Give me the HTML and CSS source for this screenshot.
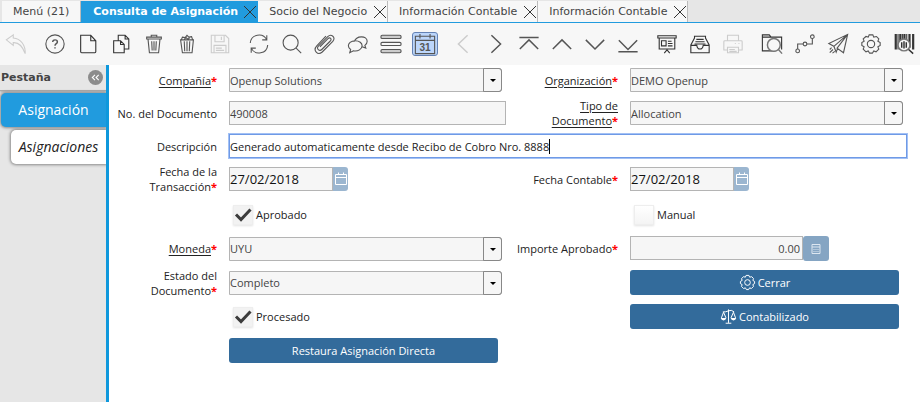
FILE: index.html
```html
<!DOCTYPE html>
<html lang="es">
<head>
<meta charset="utf-8">
<title>Consulta de Asignación</title>
<meta name="viewport" content="width=device-width, initial-scale=1">
<link rel="stylesheet" href="styles.css">
</head>
<body>
<nav class="tabs">
  <div class="tab tab-home"><a href="#menu">Menú (21)</a></div>
  <div class="tab tab-active"><a href="#consulta">Consulta de Asignación</a><button class="close"><svg viewBox="0 0 14 14"><path d="M1 1l12 12M13 1L1 13"/></svg></button></div>
  <div class="tab"><a href="#socio">Socio del Negocio</a><button class="close"><svg viewBox="0 0 14 14"><path d="M1 1l12 12M13 1L1 13"/></svg></button></div>
  <div class="tab"><a href="#info1">Información Contable</a><button class="close"><svg viewBox="0 0 14 14"><path d="M1 1l12 12M13 1L1 13"/></svg></button></div>
  <div class="tab"><a href="#info2">Información Contable</a><button class="close"><svg viewBox="0 0 14 14"><path d="M1 1l12 12M13 1L1 13"/></svg></button></div>
</nav>

<div class="toolbar">
  <div class="group">
    <button class="tool" disabled><svg viewBox="0 0 24 24"><path d="M9 2L1.500 7.500 9 13.500V10.500C15 10 19 14 22 22.500C22.500 13 17 6 9 5.500Z"/></svg></button>
  </div>
  <div class="group">
    <button class="tool"><svg viewBox="0 0 24 24"><circle cx="12" cy="12" r="10"/><path class="bold" d="M9.500 9.700C9.500 6.700 14.600 6.800 14.600 9.700C14.600 11.700 12 11.500 12 13.800M12 15.500V17"/></svg></button>
    <button class="tool dark"><svg viewBox="0 0 24 24"><path d="M4 2.500H15L20.500 8.500V20.500Q20.500 21.500 19.500 21.500H5Q4 21.500 4 20.500ZM15 2.500V8.500H20.500"/></svg></button>
    <button class="tool dark"><svg viewBox="0 0 24 24"><path d="M4 8.500H11.500L15.500 12.500V21.500H4ZM11.500 8.500V12.500H15.500M9 8.500V2.500H16.500L20.500 6.500V17.500H15.500M16.500 2.500V6.500H20.500"/></svg></button>
    <button class="tool"><svg viewBox="0 0 24 24"><path d="M4 4.500H20V6.500H4ZM9 4V2.500H15V4M5.500 7L7 21.500H17L18.500 7M9.500 9L10 19M12 9V19M14.500 9L14 19"/></svg></button>
    <button class="tool"><svg viewBox="0 0 24 24"><path d="M5 7.500H19L17.500 21.500H7ZM6 7L7 4.500 10 5 12 2.500 14 4.500 17 4 18 7M9 7L11 5 13 7 15 5M9 9L9.500 20M12 9V20M15 9L14.500 20"/></svg></button>
    <button class="tool" disabled><svg viewBox="0 0 24 24"><path d="M2.500 2.500H18L21.500 6V21.500H2.500ZM6.500 2.500V9.500H16.500V2.500M13.500 4V7.500M5.500 21.500V13.500H18.500V21.500M7.500 16.500H14M7.500 19H16.500"/></svg></button>
  </div>
  <div class="group">
    <button class="tool"><svg viewBox="0 0 24 24"><path d="M2.500 11A9.500 9.500 0 0 1 20.500 7.500M20.500 2.500V7.500H15.500M21.500 13A9.500 9.500 0 0 1 3.500 16.500M3.500 21.500V16.500H8.500"/></svg></button>
    <button class="tool"><svg viewBox="0 0 24 24"><circle cx="10.500" cy="10.500" r="8.200"/><path d="M16.500 16.500L22 22"/></svg></button>
    <button class="tool"><svg viewBox="0 0 24 24"><path d="M6.500 15L15 6.500C17.500 4 20 6.500 17.500 9L8.500 18C6 20.500 2 17 4.800 14.200L15 4C18.500 .5 24.500 4.500 20.500 9.200L9 20.700C4 25-1.500 19 3 14L13 3.500"/></svg></button>
    <button class="tool"><svg viewBox="0 0 24 24"><path d="M8 9.500C10 2.500 22 2.500 22 9C22 11 21 12.500 19.500 13.500L20.500 16.500 16.500 15M9 8.500C4 8.500 1.500 11.500 1.500 14C1.500 15.500 2.500 17 4 18L3 21.500 7 19.500C12 20.500 16.500 17.500 16.500 14C16.500 11 13.500 8.500 9 8.500Z"/></svg></button>
    <button class="tool"><svg viewBox="0 0 24 24"><rect class="gray" x="1" y="2.500" width="22" height="3.500" rx="1.500"/><rect x="1" y="10.200" width="22" height="3.500" rx="1.500"/><rect class="gray" x="1" y="18" width="22" height="3.500" rx="1.500"/></svg></button>
    <button class="tool pressed"><svg viewBox="0 0 24 24"><path d="M1.500 3.500H22.500V22.500H1.500ZM1.500 8H22.500M6.500 1V6M17.500 1V6"/><text x="12" y="19.500" text-anchor="middle">31</text></svg></button>
  </div>
  <div class="group">
    <button class="tool" disabled><svg viewBox="0 0 24 24"><path class="bold" d="M17 2.500L7 12 17 21.500"/></svg></button>
    <button class="tool"><svg viewBox="0 0 24 24"><path class="bold" d="M7 2.500L17 12 7 21.500"/></svg></button>
    <button class="tool"><svg viewBox="0 0 24 24"><path class="bold" d="M1.500 5H22.500M2 17.500L12 7.500 22 17.500"/></svg></button>
    <button class="tool"><svg viewBox="0 0 24 24"><path class="bold" d="M2 17.500L12 7.500 22 17.500"/></svg></button>
    <button class="tool"><svg viewBox="0 0 24 24"><path class="bold" d="M2 7.500L12 17.500 22 7.500"/></svg></button>
    <button class="tool"><svg viewBox="0 0 24 24"><path class="bold" d="M2 8L12 18 22 8M1.500 20.500H22.500"/></svg></button>
  </div>
  <div class="group">
    <button class="tool dark"><svg viewBox="0 0 24 24"><path d="M2 3H22V5.500H2ZM3.500 5.500V17.500H20.500V5.500M12 17.500V19M9 22L12 18.500 15 22M6 8.500H11V14H6ZM13 9H17M13 11.500H18M13 14H18"/></svg></button>
    <button class="tool dark"><svg viewBox="0 0 24 24"><path d="M2 13L6 5.500V3.500H18V5.500L22 13V21.500H2ZM2 13.500H8.500Q9 17.500 12 17.500T15.500 13.500H22M8 7H16M7 9.500H17M6 12H18"/></svg></button>
    <button class="tool" disabled><svg viewBox="0 0 24 24"><path d="M6 8.500V2.500H18V8.500M6 18.500H2V9.500Q2 8.500 3 8.500H21Q22 8.500 22 9.500V18.500H18M6 15.500H18V21.500H6ZM8 18H14M8 20H16M14 11.500H15M18 11.500H19"/></svg></button>
  </div>
  <div class="group">
    <button class="tool dark"><svg viewBox="0 0 24 24"><path d="M16 19.500H1.500V2H9L11 4.500H22.500V18M1.500 4.500H11"/><circle class="lens" cx="14" cy="13" r="7"/><path class="bold soft" d="M19 18L23 22.500"/></svg></button>
    <button class="tool"><svg viewBox="0 0 24 24"><circle cx="4" cy="19.500" r="2"/><circle cx="12" cy="12" r="2"/><circle cx="20" cy="4" r="2"/><path d="M4 17.500V12H10M14 12H20V6"/></svg></button>
    <button class="tool"><svg viewBox="0 0 24 24"><path d="M22.500 1.500L2 11.500 7.500 14.500 22.500 1.500 11 16.500 18 21.500ZM7.500 14.500L10 21 11.500 17M5 16L3 18M6.500 18L3 21.500M8.500 20L6 22"/></svg></button>
    <button class="tool"><svg viewBox="0 0 24 24"><circle cx="12" cy="12" r="4"/><path d="M10 2H14L15 4.500 18 3.800 20.500 6.500 19.500 9 22 10.500V13.500L19.500 15 20.500 17.500 17.500 20.500 15 19.500 13.500 22H10.500L9 19.500 6.500 20.500 3.500 17.500 4.500 15 2 13.500V10.500L4.500 9 3.500 6.500 6.500 3.800 9 4.500Z"/></svg></button>
    <button class="tool dark"><svg viewBox="0 0 24 24"><path class="thick" d="M3 1V18M8 1V18M12.500 1V18M18 1V16M22 1V18"/><path d="M5.500 1V18M10.200 1V18M15 1V18"/><circle class="lens" cx="12" cy="13" r="6.500"/><path class="bold" d="M9.500 10V16M12 9V17M14.500 10V16M17 18L22 22.500"/></svg></button>
  </div>
</div>

<div class="body">
  <aside class="side">
    <header class="side-head"><span>Pestaña</span><button class="collapse"><svg viewBox="0 0 14 14"><path d="M6.500 4.500L4 7l2.500 2.500M10 4.500L7.500 7 10 9.500"/></svg></button></header>
    <a class="side-tab side-on" href="#asignacion">Asignación</a>
    <a class="side-tab side-sub" href="#asignaciones">Asignaciones</a>
  </aside>

  <form class="form">
    <section class="fields">
      <label for="comp"><u>Compañía</u><b>*</b></label>
      <div class="combo"><select id="comp"><option>Openup Solutions</option></select></div>
      <label for="org"><u>Organización</u><b>*</b></label>
      <div class="combo"><select id="org"><option>DEMO Openup</option></select></div>

      <label for="num">No. del Documento</label>
      <input class="text" id="num" value="490008" readonly>
      <label for="tipo"><u>Tipo de Documento</u><b>*</b></label>
      <div class="combo"><select id="tipo"><option>Allocation</option></select></div>

      <label for="desc">Descripción</label>
      <div class="focus"><input class="text" id="desc" value="Generado automaticamente desde Recibo de Cobro Nro. 8888"><i class="caret"></i></div>

      <label for="f1">Fecha de la Transacción<b>*</b></label>
      <div class="date"><input class="text" id="f1" value="27/02/2018"><button type="button"><svg viewBox="0 0 14 14"><path d="M1.500 2.500H12.500V12.500H1.500ZM1.500 5.500H12.500M4.500 0.500V3M9.500 0.500V3"/></svg></button></div>
      <label for="f2">Fecha Contable<b>*</b></label>
      <div class="date"><input class="text" id="f2" value="27/02/2018"><button type="button"><svg viewBox="0 0 14 14"><path d="M1.500 2.500H12.500V12.500H1.500ZM1.500 5.500H12.500M4.500 0.500V3M9.500 0.500V3"/></svg></button></div>
    </section>

    <section class="fields lower">
      <label class="check first"><input type="checkbox" checked><svg viewBox="0 0 20 20"><path d="M3 9.500L8 14.500 17.500 4.500"/></svg>Aprobado</label>
      <label class="check second"><input type="checkbox"><svg viewBox="0 0 20 20"><path d="M3 9.500L8 14.500 17.500 4.500"/></svg>Manual</label>

      <label for="mon"><u>Moneda</u><b>*</b></label>
      <div class="combo"><select id="mon"><option>UYU</option></select></div>
      <label for="imp">Importe Aprobado<b>*</b></label>
      <div class="amount"><input class="text" id="imp" value="0.00" readonly><button type="button"><svg viewBox="0 0 12 12"><path d="M2 1.500H10V10.500H2ZM2 4H10"/><path class="keys" d="M4 6V9M6 6V9M8 6V9"/></svg></button></div>

      <label for="est">Estado del Documento<b>*</b></label>
      <div class="combo"><select id="est"><option>Completo</option></select></div>
      <button class="action second" type="button"><svg viewBox="0 0 24 24"><circle cx="12" cy="12" r="4"/><path d="M10 2H14L15 4.500 18 3.800 20.500 6.500 19.500 9 22 10.500V13.500L19.500 15 20.500 17.500 17.500 20.500 15 19.500 13.500 22H10.500L9 19.500 6.500 20.500 3.500 17.500 4.500 15 2 13.500V10.500L4.500 9 3.500 6.500 6.500 3.800 9 4.500Z"/></svg>Cerrar</button>

      <label class="check first"><input type="checkbox" checked><svg viewBox="0 0 20 20"><path d="M3 9.500L8 14.500 17.500 4.500"/></svg>Procesado</label>
      <button class="action second" type="button"><svg viewBox="0 0 24 24"><path d="M12 2V21M8 21.500H16M4 5.500Q8 6 12 4T20 5.500M5 6L2 14M5 6L8.500 14M19 6L15.500 14M19 6L22 14"/><path class="solid" d="M1 14H9Q8 17.500 5 17.500T1 14ZM15 14H23Q22 17.500 19 17.500T15 14Z"/></svg>Contabilizado</button>

      <button class="action first" type="button">Restaura Asignación Directa</button>
    </section>
  </form>
</div>
</body>
</html>
```
FILE: styles.css
```css
* { box-sizing: border-box; }
body {
  margin: 0;
  min-height: 100vh;
  display: flex;
  flex-direction: column;
  background: #fff;
  color: #262626;
  font: 11px/15px "Open Sans", "Noto Sans", sans-serif;
}
button { padding: 0; border: 0; background: none; font: inherit; color: inherit; }
svg { display: block; fill: none; stroke: currentColor; stroke-width: 1; }

/* window tabs */
.tabs {
  display: flex;
  padding: 1px 2px 0;
  background: #e6e6e6;
  border-bottom: 1px solid #219bde;
  font: 11px/21px "DejaVu Sans", sans-serif;
}
.tab {
  display: flex;
  align-items: center;
  padding-left: 11px;
  background: #f7f7f7;
  border-right: 1px solid #bbb;
}
.tab a { color: #444; text-decoration: none; white-space: nowrap; }
.tab-home { padding: 0 11px; }
.tab-active { padding-left: 12px; background: #219bde; border-color: #219bde; font-weight: bold; }
.tab-active a { color: #fff; }
.close { width: 14px; margin-left: 6px; color: #333; }
.tab-active .close { margin-left: 5px; }

/* toolbar */
.toolbar { display: flex; gap: 7px; height: 42px; background: #f7f7f7; }
.group { display: flex; align-items: center; gap: 1px; }
.tool { width: 32px; height: 26px; display: grid; place-items: center; color: #555; }
.tool svg { width: 22px; height: 22px; stroke-width: 1.2; }
.tool:disabled { color: #ccc; }
.dark { color: #333; }
.bold { stroke-width: 1.6; }
.thick { stroke-width: 2.4; }
.soft { color: #777; }
.gray { fill: #ccc; }
.lens { fill: #f7f7f7; stroke: #777; stroke-width: 1.6; }
.pressed { width: 26px; height: 24px; margin: 0 2px 0 4px; background: #bcd6fb; border: 1px solid #6482b4; border-radius: 3px; }
.pressed text { fill: #555; stroke: none; font: bold 11px "Liberation Sans", sans-serif; }

/* side tabs */
.body { flex: 1; display: flex; }
.side { flex: 0 0 109px; background: #e6e6e6; border-right: 3px solid #0f98dc; overflow: hidden; }
.side-head {
  display: flex;
  align-items: center;
  justify-content: space-between;
  height: 26px;
  padding: 0 3px 0 1px;
  border-bottom: 1px solid #aaa;
  box-shadow: 0 1px 2px #aaa;
  font: bold 11px/14px "DejaVu Sans", sans-serif;
  color: #444;
}
.collapse { width: 15px; height: 15px; border-radius: 50%; background: #8c8c8c; color: #fff; }
.side-tab {
  display: block;
  height: 34px;
  margin: 2px 0 3px 1px;
  border-radius: 5px 0 0 5px;
  box-shadow: 0 0 3px 1px #888;
  text-align: center;
  text-decoration: none;
  font-size: 14px;
  line-height: 34px;
}
.side-on { background: #219bde; color: #fff; }
.side-sub { margin-left: 11px; background: #fff; color: #222; font-style: italic; }

/* form */
.form { flex: 1; padding: 3px 13px 0 0; }
.fields {
  display: grid;
  grid-template-columns: 120px 1fr 124px 1fr;
  grid-auto-rows: 24px;
  row-gap: 9px;
  align-items: center;
}
.lower { margin-top: 11px; grid-auto-rows: 25px; }
.first { grid-column: 2; }
.second { grid-column: 4; }
label { padding: 0 12px 0 8px; text-align: right; color: #222; }
label b { color: #f00; }
u { text-underline-offset: 2px; }
.text, select {
  width: 100%;
  height: 24px;
  padding: 0;
  border: 1px solid #b4b4b4;
  border-radius: 0;
  background: #f6f6f6;
  color: #444;
  font: inherit;
  outline: 0;
}
select { appearance: none; border-radius: 0 3px 3px 0; }
.combo { position: relative; margin-right: 4px; }
.combo::before {
  content: "";
  position: absolute;
  inset: 0 0 0 auto;
  width: 17px;
  border: 1px solid #888;
  border-radius: 0 3px 3px 0;
  pointer-events: none;
}
.combo::after {
  content: "";
  position: absolute;
  right: 6px;
  top: 11px;
  border: 3px solid transparent;
  border-top-color: #000;
  border-bottom: 0;
  pointer-events: none;
}
.focus { position: relative; grid-column: 2 / -1; }
.focus .text { background: #fff; color: #222; border-color: #6f9ae6; box-shadow: 0 0 0 1px #a3c1f5; }
.caret { position: absolute; left: 320px; top: 5px; width: 1px; height: 15px; background: #000; }
.date { display: flex; width: 119px; }
.date .text { color: #111; font-size: 13px; }
.date button { flex: 0 0 15px; display: grid; place-items: center; background: #9bb6d0; border-radius: 0 3px 3px 0; color: #fff; }
.date svg { width: 14px; }
.amount { display: flex; width: 199px; }
.amount .text { padding-right: 2px; text-align: right; }
.amount button { flex: 0 0 26px; display: grid; place-items: center; height: 25px; background: #85a5c3; border-radius: 3px; color: #dce6f0; }
.amount svg { width: 12px; }
.keys { stroke-dasharray: 1 1; }
.check { display: flex; align-items: center; gap: 3px; padding: 0 0 0 4px; position: relative; }
.check input {
  appearance: none;
  width: 20px;
  height: 20px;
  margin: 0;
  border: 1px solid #eee;
  background: linear-gradient(#fff, #f4f4f4);
  box-shadow: 0 1px 2px #e4e4e4;
}
.check input:checked { background: #f2f2f2; }
.check svg { display: none; position: absolute; width: 20px; height: 20px; stroke: #3c3c3c; stroke-width: 3; pointer-events: none; }
.check input:checked + svg { display: block; }
.action {
  display: flex;
  align-items: center;
  justify-content: center;
  gap: 2px;
  height: 25px;
  margin-right: 8px;
  border-radius: 3px;
  background: #336b9b;
  color: #fff;
}
.action svg { width: 17px; height: 17px; stroke-width: 1.4; }
.solid { fill: currentColor; stroke: none; }
```
